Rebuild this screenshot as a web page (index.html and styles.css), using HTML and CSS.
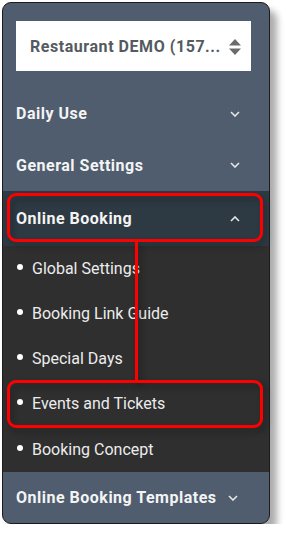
FILE: index.html
```html
<!DOCTYPE html>
<html>
<head>
<meta charset="utf-8">
<link rel="stylesheet" href="styles.css">
</head>
<body>
<div class="panel">
  <div class="top">
    <div class="select">
      <span class="select-text">Restaurant DEMO (157...</span>
      <svg class="updown" width="12" height="16" viewBox="0 0 12 16"><path d="M6 0 L12 6.5 H0 Z M0 9.5 H12 L6 16 Z" fill="#6b6b6b"/></svg>
    </div>
  </div>
  <div class="row r1"><span>Daily Use</span><svg class="chev" width="10" height="6" viewBox="0 0 10 6"><polyline points="1,1 5,5 9,1" fill="none" stroke="#e6e6e6" stroke-width="1.6"/></svg></div>
  <div class="row r2"><span>General Settings</span><svg class="chev" width="10" height="6" viewBox="0 0 10 6"><polyline points="1,1 5,5 9,1" fill="none" stroke="#e6e6e6" stroke-width="1.6"/></svg></div>
  <div class="row r3 open"><span>Online Booking</span><svg class="chev" width="10" height="6" viewBox="0 0 10 6"><polyline points="1,5 5,1 9,5" fill="none" stroke="#e6e6e6" stroke-width="1.6"/></svg></div>
  <div class="sub">
    <div class="item"><i class="dot"></i>Global Settings</div>
    <div class="item"><i class="dot"></i>Booking Link Guide</div>
    <div class="item"><i class="dot"></i>Special Days</div>
    <div class="item"><i class="dot"></i>Events and Tickets</div>
    <div class="item last"><i class="dot"></i>Booking Concept</div>
  </div>
  <div class="row r4"><span>Online Booking Templates</span><svg class="chev inline" width="10" height="6" viewBox="0 0 10 6"><polyline points="1,1 5,5 9,1" fill="none" stroke="#e6e6e6" stroke-width="1.6"/></svg></div>
</div>
<div class="mark box1"></div>
<div class="mark line"></div>
<div class="mark box2"></div>
</body>
</html>
```
FILE: styles.css
```css
html, body {
  margin: 0;
  padding: 0;
  background: #ffffff;
  font-family: Roboto, "Liberation Sans", sans-serif;
}
.panel {
  margin: 2px 0 0 2px;
  width: 268px;
  height: 522px;
  box-sizing: border-box;
  border: 1px solid #1c1c1c;
  border-radius: 9px;
  background: #4f5d6e;
  box-shadow: 7px 8px 7px rgba(0,0,0,0.33);
  overflow: hidden;
  display: flex;
  flex-direction: column;
}
.top {
  padding: 18px 0 0 13px;
  height: 85px;
  box-sizing: border-box;
}
.select {
  width: 235px;
  height: 50px;
  background: #fff;
  box-sizing: border-box;
  padding: 0 10px 0 14px;
  display: flex;
  align-items: center;
  justify-content: space-between;
}
.select-text {
  font-weight: 700;
  font-size: 16px;
  letter-spacing: 0.55px;
  color: #555a60;
}
.updown { margin-top: 1px; }
.row {
  display: flex;
  align-items: center;
  justify-content: space-between;
  padding: 0 29px 0 13px;
  font-weight: 700;
  font-size: 16px;
  letter-spacing: 0.5px;
  color: #f4f4f4;
  flex-shrink: 0;
}
.r1 { height: 51px; }
.r2 { height: 52px; }
.r3 { height: 55px; background: #2e3a43; }
.r4 { height: 51px; justify-content: flex-start; gap: 11px; }
.sub {
  background: #2f2f2f;
  height: 226px;
  display: flex;
  flex-direction: column;
}
.item {
  height: 45px;
  display: flex;
  align-items: center;
  padding-left: 14px;
  font-size: 16px;
  color: #ececec;
}
.item.last { height: 46px; }
.dot {
  width: 6px;
  height: 6px;
  border-radius: 50%;
  background: #ffffff;
  margin-right: 9px;
  margin-top: -3px;
}
.mark {
  position: absolute;
  box-sizing: border-box;
  filter: drop-shadow(3px 4px 3px rgba(0,0,0,0.35));
}
.box1 {
  left: 7px;
  top: 193px;
  width: 256px;
  height: 49px;
  border: 3px solid #ff0000;
  border-radius: 9px;
}
.box2 {
  left: 7px;
  top: 380px;
  width: 256px;
  height: 48px;
  border: 3px solid #ff0000;
  border-radius: 9px;
}
.line {
  left: 135px;
  top: 241px;
  width: 3px;
  height: 140px;
  background: #ff0000;
}
```
